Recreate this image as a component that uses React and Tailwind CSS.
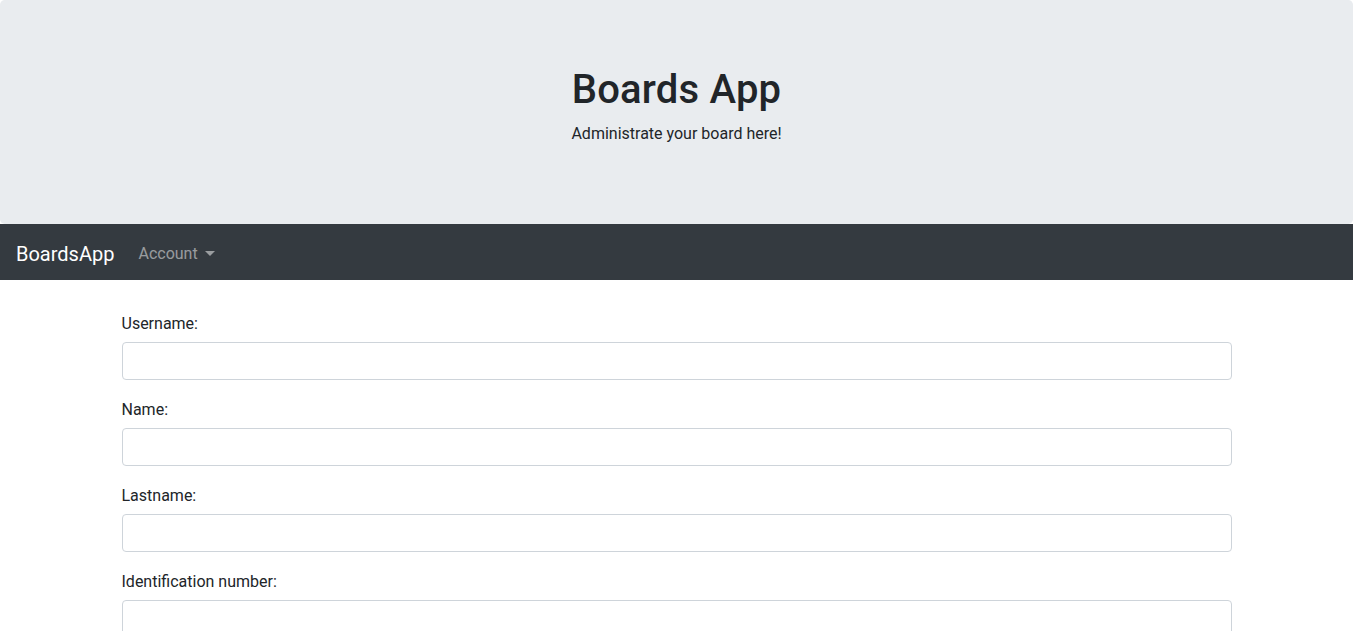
export default function App() {
  const fields = ["Username:", "Name:", "Lastname:", "Identification number:"];
  return (
    <div className="min-h-screen bg-white text-[#212529] font-['Roboto',sans-serif] text-[16px] leading-[24px]">
      <div className="bg-[#e9ecef] rounded-[4.8px] px-8 pt-[66px] pb-[62px] text-center">
        <h1 className="text-[40px] leading-[48px] font-medium tracking-[0.2px] mb-2">Boards App</h1>
        <p className="mb-4">Administrate your board here!</p>
      </div>
      <nav className="bg-[#343a40] h-[56px] px-4 pt-[10px] pb-[6px] flex items-center">
        <a className="text-white text-[20px] leading-[30px] py-[5px] mr-4">BoardsApp</a>
        <a className="text-[rgba(255,255,255,0.5)] px-2 py-2 flex items-center">
          Account
          <span className="ml-[7px] inline-block w-0 h-0 border-l-[5px] border-r-[5px] border-t-[5px] border-l-transparent border-r-transparent border-t-[rgba(255,255,255,0.5)] mt-[-2px]"></span>
        </a>
      </nav>
      <div className="w-[1110px] mx-auto pt-[30px]">
        {fields.map((f) => (
          <div key={f} className="mb-4">
            <label className="block pt-[2px] mb-[6px]">{f}</label>
            <input
              type="text"
              className="block w-full h-[38px] px-3 py-[6px] border border-[#ced4da] rounded-[4px] bg-white outline-none"
            />
          </div>
        ))}
      </div>
    </div>
  );
}
